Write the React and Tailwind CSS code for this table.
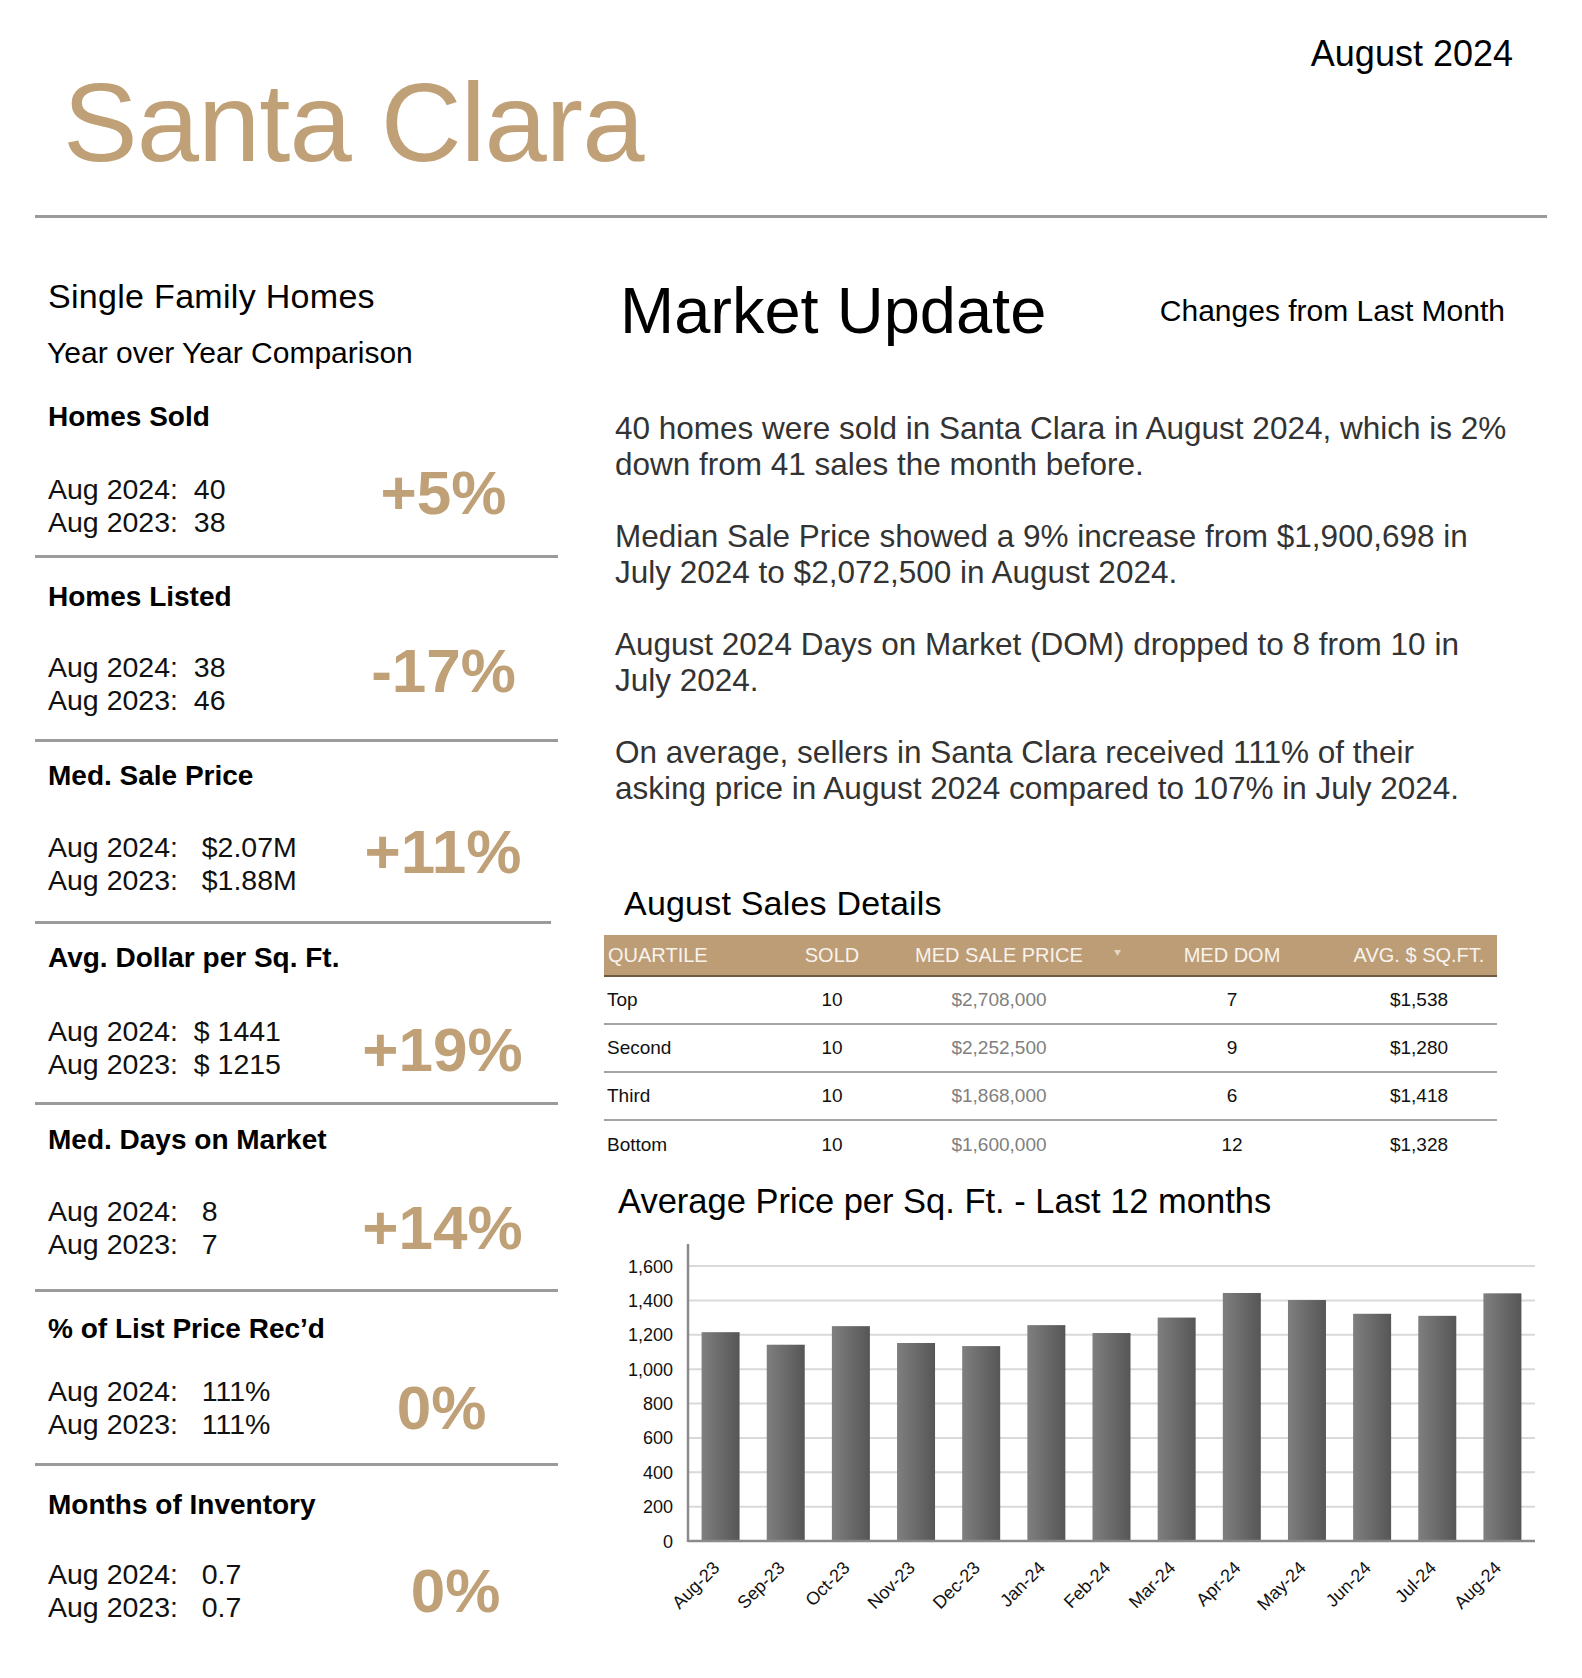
import React from 'react';

const STATS = [
  { title: 'Homes Sold', a: 'Aug 2024:  40', b: 'Aug 2023:  38', pct: '+5%', box: 'h-[182px] w-[523px] border-b-[3px] pt-[24px]', row: 'mt-[39px]', pc: '-mt-[12px] pr-[6px]' },
  { title: 'Homes Listed', a: 'Aug 2024:  38', b: 'Aug 2023:  46', pct: '-17%', box: 'h-[184px] w-[523px] border-b-[3px] pt-[22px]', row: 'mt-[37px]', pc: '-mt-[12px] pr-[6px]' },
  { title: 'Med. Sale Price', a: 'Aug 2024:   $2.07M', b: 'Aug 2023:   $1.88M', pct: '+11%', box: 'h-[182px] w-[516px] border-b-[3px] pt-[17px]', row: 'mt-[38px]', pc: '-mt-[11px]' },
  { title: 'Avg. Dollar per Sq. Ft.', a: 'Aug 2024:  $ 1441', b: 'Aug 2023:  $ 1215', pct: '+19%', box: 'h-[181px] w-[523px] border-b-[3px] pt-[17px]', row: 'mt-[40px]', pc: 'mt-[3px] pr-[8px]' },
  { title: 'Med. Days on Market', a: 'Aug 2024:   8', b: 'Aug 2023:   7', pct: '+14%', box: 'h-[187px] w-[523px] border-b-[3px] pt-[18px]', row: 'mt-[38px]', pc: 'mt-[1px] pr-[8px]' },
  { title: '% of List Price Rec\u2019d', a: 'Aug 2024:   111%', b: 'Aug 2023:   111%', pct: '0%', box: 'h-[174px] w-[523px] border-b-[3px] pt-[20px]', row: 'mt-[29px]', pc: 'mt-[1px] pr-[10px]' },
  { title: 'Months of Inventory', a: 'Aug 2024:   0.7', b: 'Aug 2023:   0.7', pct: '0%', box: 'w-[523px] pt-[22px]', row: 'mt-[36px]', pc: 'mt-[1px] pl-[18px]' },
];

const PARAGRAPHS = [
  ['40 homes were sold in Santa Clara in August 2024, which is 2%', 'down from 41 sales the month before.'],
  ['Median Sale Price showed a 9% increase from $1,900,698 in', 'July 2024 to $2,072,500 in August 2024.'],
  ['August 2024 Days on Market (DOM) dropped to 8 from 10 in', 'July 2024.'],
  ['On average, sellers in Santa Clara received 111% of their', 'asking price in August 2024 compared to 107% in July 2024.'],
];

const QUARTILES = [
  { q: 'Top', sold: 10, price: '$2,708,000', dom: 7, sqft: '$1,538' },
  { q: 'Second', sold: 10, price: '$2,252,500', dom: 9, sqft: '$1,280' },
  { q: 'Third', sold: 10, price: '$1,868,000', dom: 6, sqft: '$1,418' },
  { q: 'Bottom', sold: 10, price: '$1,600,000', dom: 12, sqft: '$1,328' },
];

const MONTHS = [
  ['Aug-23', 1215], ['Sep-23', 1142], ['Oct-23', 1250], ['Nov-23', 1152], ['Dec-23', 1134],
  ['Jan-24', 1256], ['Feb-24', 1210], ['Mar-24', 1300], ['Apr-24', 1443], ['May-24', 1402],
  ['Jun-24', 1322], ['Jul-24', 1310], ['Aug-24', 1441],
];

function StatBlock({ s }) {
  return (
    <div className={`${s.box} border-[#9b9b9b] pl-[13px]`}>
      <div className="text-[28px] leading-[34px] font-bold text-black">{s.title}</div>
      <div className={`${s.row} flex items-start`}>
        <div className="w-[287px] whitespace-pre text-[28.5px] leading-[33px] text-[#111]">
          <div>{s.a}</div>
          <div>{s.b}</div>
        </div>
        <div className={`${s.pc} flex-1 text-center text-[62px] leading-[64px] font-bold text-[#bfa077]`}>
          {s.pct}
        </div>
      </div>
    </div>
  );
}

function SalesTable() {
  return (
    <div className="w-[893px] text-[19px]">
      <div className="flex h-[42px] items-center border-b-2 border-[#6f5b41] bg-[#bd9d76] text-[20px] text-[#f8f3ec]">
        <div className="w-[177px] pl-[4px]">QUARTILE</div>
        <div className="w-[102px] text-center">SOLD</div>
        <div className="relative w-[232px] text-center">
          MED SALE PRICE
          <svg className="absolute right-[-6px] top-[10px]" width="7" height="6" viewBox="0 0 7 6">
            <path d="M0 0h7L3.5 6z" fill="#e4d6c3" />
          </svg>
        </div>
        <div className="w-[234px] text-center">MED DOM</div>
        <div className="w-[140px] text-center">AVG. $ SQ.FT.</div>
      </div>
      {QUARTILES.map((r, i) => (
        <div
          key={r.q}
          className={`flex h-[48px] items-center text-[#111] ${i < QUARTILES.length - 1 ? 'border-b-2 border-[#a3a3a3]' : ''}`}
        >
          <div className="w-[177px] pl-[3px]">{r.q}</div>
          <div className="w-[102px] text-center">{r.sold}</div>
          <div className="w-[232px] text-center text-[#808080]">{r.price}</div>
          <div className="w-[234px] text-center">{r.dom}</div>
          <div className="w-[140px] text-center">{r.sqft}</div>
        </div>
      ))}
    </div>
  );
}

function PriceChart() {
  const x0 = 84;
  const x1 = 931;
  const yTop = 14;
  const y0 = 311;
  const y1600 = 36;
  const k = (y0 - y1600) / 1600;
  const slot = (x1 - x0) / MONTHS.length;
  const ticks = [0, 200, 400, 600, 800, 1000, 1200, 1400, 1600];

  return (
    <svg width="946" height="420" viewBox="0 0 946 420" className="block">
      <defs>
        <linearGradient id="bar" x1="0" x2="1" y1="0" y2="0">
          <stop offset="0" stopColor="#7f7f7f" />
          <stop offset="1" stopColor="#565656" />
        </linearGradient>
      </defs>
      {ticks.slice(1).map((t) => (
        <line key={t} x1={x0} x2={x1} y1={y0 - t * k} y2={y0 - t * k} stroke="#d9d9d9" strokeWidth="2" />
      ))}
      {ticks.map((t) => (
        <text
          key={t}
          x="69"
          y={y0 - t * k + 6.5}
          textAnchor="end"
          fontSize="18"
          fontFamily="Liberation Sans, Arial, sans-serif"
          fill="#111"
        >
          {t.toLocaleString('en-US')}
        </text>
      ))}
      {MONTHS.map(([m, v], i) => {
        const bx = x0 + i * slot + (slot - 38) / 2;
        const cx = bx + 19;
        return (
          <g key={m}>
            <rect x={bx} y={y0 - v * k} width="38" height={v * k} fill="url(#bar)" />
            <text
              transform={`translate(${cx} ${y0 + 28}) rotate(-45)`}
              textAnchor="end"
              fontSize="18"
              fontFamily="Liberation Sans, Arial, sans-serif"
              fill="#111"
            >
              {m}
            </text>
          </g>
        );
      })}
      <line x1={x0} x2={x0} y1={yTop} y2={y0 + 1} stroke="#8a8a8a" strokeWidth="2.5" />
      <line x1={x0} x2={x1} y1={y0} y2={y0} stroke="#8a8a8a" strokeWidth="2.5" />
    </svg>
  );
}

export default function App() {
  return (
    <div className="h-[1678px] w-[1582px] overflow-hidden bg-white font-['Liberation_Sans',Arial,sans-serif] text-black">
      <header className="flex justify-between pl-[63px] pr-[69px]">
        <h1 className="mt-[67px] text-[112px] leading-[112px] tracking-[-1px] text-[#c0a077]">Santa Clara</h1>
        <div className="mt-[32px] text-[36px] leading-[44px]">August 2024</div>
      </header>
      <div className="mx-[35px] mt-[36px] h-[3px] bg-[#9b9b9b]" />

      <div className="flex pl-[35px]">
        {/* left: year over year */}
        <aside className="w-[569px]">
          <div className="mt-[58px] pl-[13px] text-[34px] leading-[40px] tracking-[0.3px]">Single Family Homes</div>
          <div className="mt-[19px] pl-[12px] text-[30px] leading-[36px]">Year over Year Comparison</div>
          <div className="mt-[5px]">
            {STATS.map((s) => (
              <StatBlock key={s.title} s={s} />
            ))}
          </div>
        </aside>

        {/* right: market update */}
        <section className="w-[946px]">
          <div className="mt-[53px] flex items-center justify-between pl-[16px] pr-[45px]">
            <h2 className="text-[65px] leading-[80px]">Market Update</h2>
            <div className="text-[30px] leading-[40px]">Changes from Last Month</div>
          </div>

          <div className="mt-[59px] space-y-[36px] pl-[11px] text-[31.5px] leading-[36px] text-[#333]">
            {PARAGRAPHS.map((p) => (
              <p key={p[0]}>
                {p[0]}
                <br />
                {p[1]}
              </p>
            ))}
          </div>

          <h3 className="mt-[75px] pl-[20px] text-[34px] leading-[44px] tracking-[0.2px]">August Sales Details</h3>
          <div className="mt-[10px]">
            <SalesTable />
          </div>

          <h3 className="mt-[10px] pl-[14px] text-[34.5px] leading-[44px]">Average Price per Sq. Ft. - Last 12 months</h3>
          <div className="mt-[7px]">
            <PriceChart />
          </div>
        </section>
      </div>
    </div>
  );
}
